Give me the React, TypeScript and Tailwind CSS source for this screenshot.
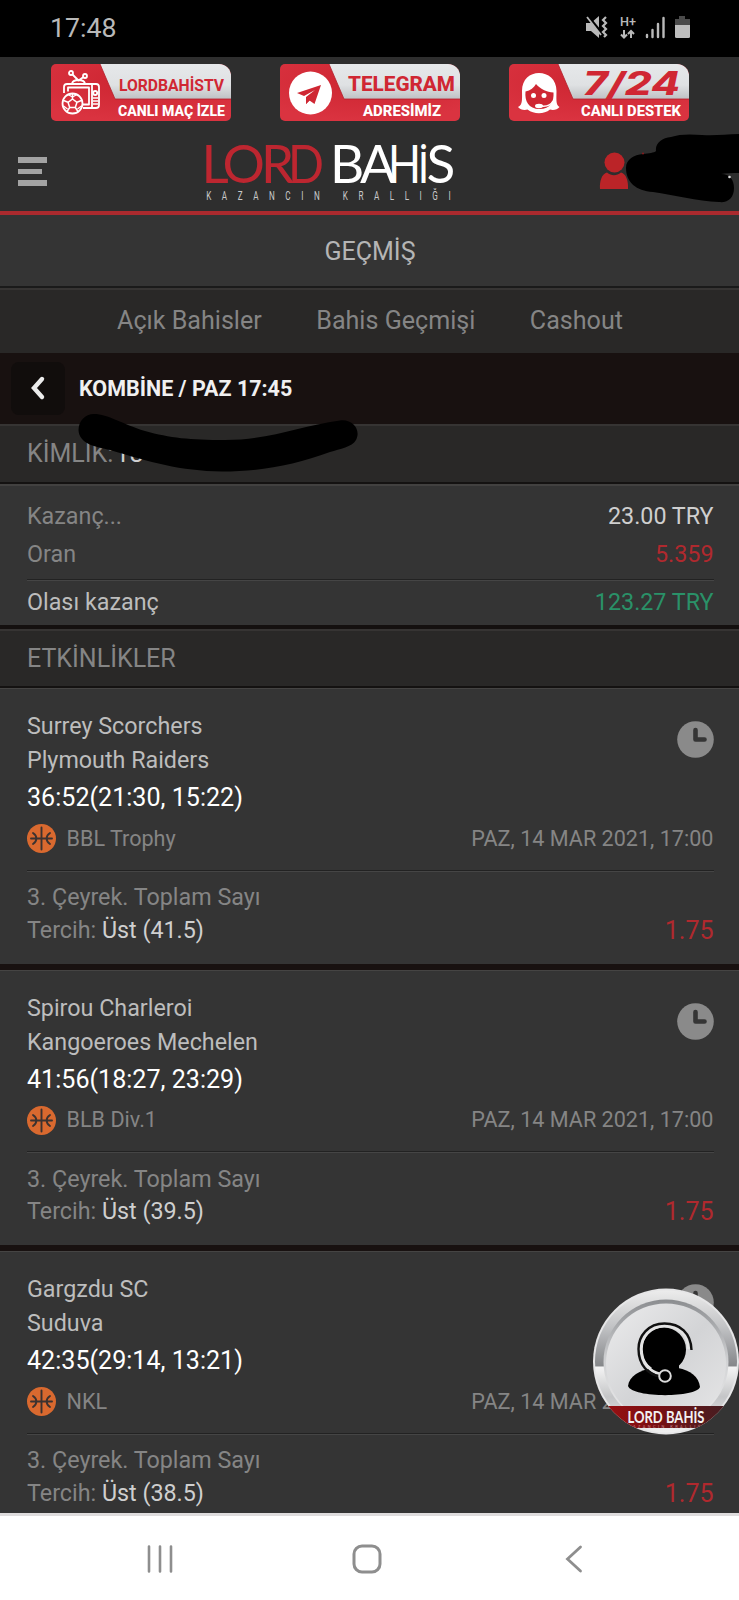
import type { ReactNode } from 'react';

interface BetEvent {
  home: string;
  away: string;
  score: string;
  league: string;
  date: string;
  market: string;
  pick: string;
  odds: string;
}

const events: BetEvent[] = [
  {
    home: 'Surrey Scorchers',
    away: 'Plymouth Raiders',
    score: '36:52(21:30, 15:22)',
    league: 'BBL Trophy',
    date: 'PAZ, 14 MAR 2021, 17:00',
    market: '3. Çeyrek. Toplam Sayı',
    pick: 'Üst (41.5)',
    odds: '1.75',
  },
  {
    home: 'Spirou Charleroi',
    away: 'Kangoeroes Mechelen',
    score: '41:56(18:27, 23:29)',
    league: 'BLB Div.1',
    date: 'PAZ, 14 MAR 2021, 17:00',
    market: '3. Çeyrek. Toplam Sayı',
    pick: 'Üst (39.5)',
    odds: '1.75',
  },
  {
    home: 'Gargzdu SC',
    away: 'Suduva',
    score: '42:35(29:14, 13:21)',
    league: 'NKL',
    date: 'PAZ, 14 MAR 2021, 17:00',
    market: '3. Çeyrek. Toplam Sayı',
    pick: 'Üst (38.5)',
    odds: '1.75',
  },
];

const tabs = ['Açık Bahisler', 'Bahis Geçmişi', 'Cashout'];

function StatusBar() {
  return (
    <div className="flex h-[57px] shrink-0 items-center justify-between bg-black pl-[50px] pr-[48px]">
      <span className="text-[26.700px] leading-none text-[#b9b9b9]">17:48</span>
      <svg width="106" height="26" viewBox="0 0 106 26" fill="none" className="-mt-1">
        {/* muted speaker */}
        <path d="M1 9h5l8-7v22l-8-7H1z" fill="#b9b9b9" />
        <path d="M1 0l17 21" stroke="#000" strokeWidth="3" />
        <path d="M2 3l14 18" stroke="#b9b9b9" strokeWidth="1.8" />
        <path d="M21 3l-3 3 3 3-3 3 3 3-3 3 3 3-2 2" stroke="#b9b9b9" strokeWidth="2.2" />
        {/* network type */}
        <text x="35" y="12" fontSize="12.500" fontWeight="500" fill="#b9b9b9" textLength="16" lengthAdjust="spacingAndGlyphs">H+</text>
        <path d="M39 16v7M36 20.500l3 3 3-3M46 24v-7M43 20l3-3 3 3" stroke="#b9b9b9" strokeWidth="2" />
        {/* signal */}
        <path d="M62 21v2M67.500 16v7M73 10v13M78.500 4v19" stroke="#b9b9b9" strokeWidth="2.4" strokeLinecap="round" />
        {/* battery */}
        <path d="M94 2h6v3h5v6H90V5h4z" fill="#4a4a4a" />
        <path d="M90 11h15v11.500a1.500 1.500 0 0 1-1.500 1.500h-12a1.500 1.500 0 0 1-1.500-1.500z" fill="#bdbdbd" />
      </svg>
    </div>
  );
}

function Banner({ id, children }: { id: string; children: ReactNode }) {
  return (
    <svg width="180" height="58" viewBox="0 0 180 58">
      <defs>
        <linearGradient id={`${id}-silver`} x1="0" y1="0" x2="0" y2="1">
          <stop offset="0" stopColor="#e6e8ea" />
          <stop offset="0.6" stopColor="#dfe1e3" />
          <stop offset="1" stopColor="#bfc1c4" />
        </linearGradient>
        <radialGradient id={`${id}-red`} cx="0.5" cy="0.3" r="0.7">
          <stop offset="0" stopColor="#cc2430" />
          <stop offset="1" stopColor="#da3340" />
        </radialGradient>
        <clipPath id={`${id}-clip`}>
          <path d="M5 0h163a12 12 0 0 1 12 12v40a5 5 0 0 1-5 5H5a5 5 0 0 1-5-5V5a5 5 0 0 1 5-5z" />
        </clipPath>
      </defs>
      <g clipPath={`url(#${id}-clip)`}>
        <rect width="180" height="57" fill={`url(#${id}-red)`} />
        <path d="M49 0h131v35H64z" fill={`url(#${id}-silver)`} />
        <path d="M49 0l15 35h116" fill="none" stroke="#b21f2b" strokeWidth="0.8" />
      </g>
      {children}
    </svg>
  );
}

function Banners() {
  return (
    <div className="flex h-[65px] gap-[49px] pl-[51px] pt-[7px]">
      <Banner id="tv">
        <g fill="none" stroke="#fff" strokeWidth="1.8" strokeLinejoin="round">
          <circle cx="20" cy="9" r="2" />
          <circle cx="34" cy="12" r="2" />
          <path d="M21.500 10.500l6 6 5-3.500M21 19.500q1-3.500 6.500-3.500t6.500 3.500" />
          <path d="M13 29v-6a3 3 0 0 1 3-3h29a3 3 0 0 1 3 3v18a3 3 0 0 1-3 3H32" />
          <path d="M17 27.500v-4h21v17H32M41 20v24" />
          <circle cx="44.200" cy="29" r="2" />
          <path d="M42 34h5M42 37h5M42 40h5" strokeWidth="1.300" />
          <circle cx="21.500" cy="39.500" r="10" />
          <path d="M21.500 35l4.500 3.300-1.700 5.200h-5.600L17 38.300zM21.500 35v-5M26 38.300l5-2M24.300 43.500l3 4.500M18.700 43.500l-3 4.500M17 38.300l-5-2" strokeWidth="1.500" />
          <path d="M17 30.500l4.500 2.500 4.500-2.500M30.500 42l-4 3M12.500 42l4 3" strokeWidth="1.300" />
        </g>
        <text x="68" y="27" fontSize="16.800" fontWeight="700" fill="#d02733" textLength="105" lengthAdjust="spacingAndGlyphs">LORDBAHİSTV</text>
        <text x="67" y="51.500" fontSize="14.500" fontWeight="800" fill="#fff" textLength="107" lengthAdjust="spacingAndGlyphs">CANLI MAÇ İZLE</text>
      </Banner>
      <Banner id="telegram">
        <circle cx="30.500" cy="29" r="21.500" fill="#fff" />
        <path d="M17 29l24-8-6.500 19-5-3.500-3.500 3.500v-7l9-7-11 6z" fill="#cf2733" />
        <path d="M26 40v-7l4 3z" fill="#cf2733" />
        <text x="68" y="27" fontSize="21" fontWeight="800" fill="#d02733" textLength="107" lengthAdjust="spacingAndGlyphs">TELEGRAM</text>
        <text x="83" y="51.500" fontSize="14.500" fontWeight="800" fill="#fff" textLength="78" lengthAdjust="spacingAndGlyphs">ADRESİMİZ</text>
      </Banner>
      <Banner id="support">
        {/* agent: hair, face, fringe, headset */}
        <path d="M9 43c5-2 4-9 4-16C13 15 21 9 30 9s17.500 6 17.500 18c0 7-1 14 3 16-2 2.500-6 3.500-9.500 2.500-6 5-16 5-22.500 0C15 46.500 11 45.500 9 43z" fill="#fff" />
        <path d="M16.500 27.500c5-1 8.500-4 10.500-7.500 4 5 11 8 17.500 8.500.6 9-3 16.500-14 16.500s-15-8-14-17.500z" fill="#cf2733" />
        <circle cx="24.500" cy="31.500" r="2.500" fill="#fff" />
        <circle cx="35" cy="31.500" r="2.500" fill="#fff" />
        <path d="M44 37q-3 6-12 5" stroke="#fff" strokeWidth="1.500" fill="none" />
        <ellipse cx="30" cy="42" rx="4" ry="2.200" fill="#fff" />
        <text x="74" y="31" fontSize="32" fontWeight="800" fontStyle="italic" fill="#d02733" textLength="97" lengthAdjust="spacingAndGlyphs" fontFamily="Inter, sans-serif">7/24</text>
        <text x="72" y="51.500" fontSize="14.500" fontWeight="800" fill="#fff" textLength="100" lengthAdjust="spacingAndGlyphs">CANLI DESTEK</text>
      </Banner>
    </div>
  );
}

function Header() {
  return (
    <header className="h-[158px] shrink-0 border-b-4 border-[#ab2a2e] bg-[#2e2e2e]">
      <Banners />
      <div className="relative flex h-[89px] items-start pl-[18px]">
        <div className="mt-[35px] flex flex-col gap-[6px]">
          <span className="h-[5.500px] w-[29px] bg-[#a3a3a3]" />
          <span className="h-[5.500px] w-6 bg-[#a3a3a3]" />
          <span className="h-[5.500px] w-[29px] bg-[#a3a3a3]" />
        </div>
        <svg width="250" height="70" viewBox="0 0 250 70" className="ml-[156px] mt-[17px] overflow-visible" fontFamily="Lato, sans-serif">
          {/* letters are placed one by one, the wordmark is kerned very tight */}
          <g fontSize="53" fill="#bd2630">
            <text x="-1.500 19.500 58" y="43.800">LOR</text>
            <text x="85" y="43.800" textLength="36" lengthAdjust="spacingAndGlyphs">D</text>
          </g>
          <g fontSize="53" fill="#fff">
            <text x="127 157" y="43.800">BA</text>
            <text x="185" y="43.800" textLength="33" lengthAdjust="spacingAndGlyphs">H</text>
            <text x="215" y="43.800" fontSize="43" textLength="11" lengthAdjust="spacingAndGlyphs">İ</text>
            <text x="223.500" y="43.800">S</text>
          </g>
          <g transform="scale(0.65 1)">
            <text x="5" y="61" fontSize="12.500" fill="#c9c9c9" fontFamily="Roboto, sans-serif" textLength="376">KAZANCIN KRALLIĞI</text>
          </g>
        </svg>
        <svg width="30" height="40" viewBox="0 0 30 40" className="ml-[146px] mt-[29px]" fill="#bb2428">
          <circle cx="15.500" cy="11.500" r="10" />
          <path d="M1 38c-.6-8 2-15.500 7-16.500 4.500 3.500 9.500 3.500 14 0 5 1 7.600 8.500 7 16.500z" />
        </svg>
        {/* marker stroke over the account name */}
        <svg width="115" height="75" viewBox="625 130 115 75" className="absolute right-[-1px] top-[8px]">
          <path d="M626 168c0-9 8-13 17-14 6-1 11-1 13-3-1-8 6-13 15-14 8-3 20-3 31-2 14 1 24-1 38-1v39c-7 0-14 0-19 1 9 0 13 6 13 14 0 10-6 15-15 14-22-1-45-7-66-10-17-1-27-10-27-24z" fill="#000" />
          <circle cx="729.500" cy="177" r="1.300" fill="#ddd" />
          <circle cx="643" cy="153.500" r="1" fill="#8a1a1c" />
        </svg>
      </div>
    </header>
  );
}

function SectionTitle({ children }: { children: ReactNode }) {
  return (
    <div className="flex h-[56px] items-center border-t-2 border-[#363433] bg-[#292827] px-[27px] text-[25px] leading-none text-[#858585]">
      {children}
    </div>
  );
}

function Divider() {
  return <div className="h-[2px] border-b border-t border-b-[#454545] border-t-[#222]" />;
}

function SummaryRow({ label, value, labelClass, valueClass }: { label: string; value: string; labelClass: string; valueClass: string }) {
  return (
    <div className="flex h-[38px] items-center justify-between text-[23.300px] leading-none">
      <span className={labelClass}>{label}</span>
      <span className={valueClass}>{value}</span>
    </div>
  );
}

function ClockIcon() {
  return (
    <svg width="37" height="37" viewBox="0 0 37 37">
      <circle cx="18.500" cy="18.500" r="18.300" fill="#8a8a8a" />
      <path d="M18.500 9v9.500H27.500" fill="none" stroke="#353535" strokeWidth="4.600" strokeLinecap="round" strokeLinejoin="round" />
    </svg>
  );
}

function BasketballIcon() {
  return (
    <svg width="29" height="29" viewBox="0 0 29 29">
      <circle cx="14.500" cy="14.500" r="14.500" fill="#d9692f" />
      <path d="M14.500 3.500v22M4 14.500h21M6 9c4.500 3 4.500 8 0 11M23 9c-4.500 3-4.500 8 0 11" fill="none" stroke="#3b3230" strokeWidth="1.900" strokeLinecap="round" />
    </svg>
  );
}

function EventCard({ event }: { event: BetEvent }) {
  return (
    <div className="h-[281.500px] shrink-0 border-b-[6px] border-[#181110]">
      <div className="h-full border-t border-[#454443] bg-[#343434] pl-[27px] pr-[25.500px] pt-[20px]">
        <div className="flex items-start justify-between">
          <div className="text-[23.300px] leading-[34px] text-[#bdbdbd]">
            <p>{event.home}</p>
            <p>{event.away}</p>
          </div>
          <div className="mt-[12px]">
            <ClockIcon />
          </div>
        </div>
        <p className="text-[25.100px] leading-[42px] text-white">{event.score}</p>
        <div className="flex h-[39.500px] items-center text-[21.600px] leading-none text-[#858585]">
          <BasketballIcon />
          <span className="ml-[10.500px]">{event.league}</span>
          <span className="ml-auto">{event.date}</span>
        </div>
        <div className="mb-[9.500px] mt-[11px]">
          <Divider />
        </div>
        <p className="text-[23.300px] leading-[32.500px] text-[#858585]">{event.market}</p>
        <div className="flex justify-between leading-[33px] text-[#858585]">
          <p className="text-[23.300px]">
            Tercih: <span className="text-[#cfcfcf]">{event.pick}</span>
          </p>
          <span className="text-[25px] text-[#b0292e]">{event.odds}</span>
        </div>
      </div>
    </div>
  );
}

function SupportBubble() {
  return (
    <svg width="147" height="148" viewBox="0 0 147 148" className="absolute right-0 top-[1288px]">
      <defs>
        <linearGradient id="rim" x1="0" y1="0" x2="0" y2="1">
          <stop offset="0" stopColor="#ececec" />
          <stop offset="0.25" stopColor="#c3c4c6" />
          <stop offset="0.53" stopColor="#85878a" />
          <stop offset="0.54" stopColor="#f4f4f4" />
          <stop offset="0.75" stopColor="#c4c5c7" />
          <stop offset="1" stopColor="#f0f0f0" />
        </linearGradient>
        <linearGradient id="groove" x1="0" y1="0" x2="0" y2="1">
          <stop offset="0" stopColor="#8b8d90" />
          <stop offset="0.5" stopColor="#d2d3d5" />
          <stop offset="1" stopColor="#ededed" />
        </linearGradient>
        <linearGradient id="face" x1="0" y1="0" x2="1" y2="1">
          <stop offset="0" stopColor="#ececed" />
          <stop offset="0.5" stopColor="#d3d4d6" />
          <stop offset="1" stopColor="#e6e6e7" />
        </linearGradient>
        <linearGradient id="ribbon" x1="0" y1="0" x2="1" y2="0">
          <stop offset="0" stopColor="#a01013" />
          <stop offset="0.4" stopColor="#7d0f12" />
          <stop offset="1" stopColor="#3a2024" />
        </linearGradient>
        <clipPath id="bubble">
          <circle cx="74" cy="73.500" r="73" />
        </clipPath>
      </defs>
      <g clipPath="url(#bubble)">
        <rect width="147" height="148" fill="#e6e6e7" />
        <circle cx="74" cy="73.500" r="71" fill="url(#rim)" />
        <circle cx="74" cy="74" r="62.500" fill="url(#groove)" />
        <circle cx="74" cy="75.500" r="60" fill="url(#face)" />
        <path d="M36 98c1-10 12-16 25-18h25c12 2 21 9 22 19-4 11-68 11-72-1z" fill="#000" />
        <path d="M60 74h27v15H60z" fill="#000" />
        <circle cx="72" cy="61.500" r="22" fill="#000" />
        <path d="M96.500 61C96 46 86 38 72.500 38 58 38 49.500 49 49.500 61c0 13 8 23 19 25" fill="none" stroke="#e4e4e4" strokeWidth="2.600" />
        <path d="M99.500 62C99 45 88 35.500 72.500 35.500 56 35.500 46.500 48 46.500 61c0 16 10 26 22 27.500" fill="none" stroke="#111" strokeWidth="2.400" />
        <circle cx="73" cy="88" r="5.800" fill="#000" stroke="#dcdcdc" strokeWidth="2" />
        <rect y="118" width="147" height="22" fill="url(#ribbon)" />
        <text x="35.500" y="134.500" fontSize="17.500" fontWeight="700" fill="#f2f2f2" fontFamily="Lato, sans-serif" textLength="77" lengthAdjust="spacingAndGlyphs">LORD BAHİS</text>
        <text x="36" y="139.800" fontSize="4" fill="#c48a8c" textLength="76">KAZANCIN KRALLIĞI</text>
      </g>
    </svg>
  );
}

function NavBar() {
  return (
    <div className="flex h-[87px] shrink-0 items-center border-t-[3px] border-[#dedcdd] bg-white pl-[146px] pt-[1.500px]">
      <svg width="28" height="30" viewBox="0 0 28 30" stroke="#8e8e8e" strokeWidth="2.600" strokeLinecap="round">
        <path d="M3 2.500v25M14 2.500v25M25 2.500v25" />
      </svg>
      <svg width="30" height="30" viewBox="0 0 30 30" fill="none" stroke="#8e8e8e" strokeWidth="3" className="ml-[177.500px]">
        <rect x="2" y="2" width="26" height="26" rx="8" />
      </svg>
      <svg width="22" height="30" viewBox="0 0 22 30" fill="none" stroke="#8e8e8e" strokeWidth="2.800" strokeLinecap="round" className="ml-[182px]">
        <path d="M16.500 3L3.500 15l13 12" />
      </svg>
    </div>
  );
}

export default function App() {
  return (
    <div className="relative flex h-[1600px] w-[739px] flex-col overflow-hidden bg-[#343434] font-['Roboto',sans-serif]">
      <StatusBar />
      <Header />

      <div className="flex h-[73px] shrink-0 items-center justify-center border-b-2 border-[#1a1a1a] bg-[#343434] pl-px pt-px text-[25px] leading-none text-[#b5b5b5]">
        <span>GEÇMİŞ</span>
      </div>
      <div className="flex h-[65px] shrink-0 items-center justify-center gap-[54.500px] border-t-2 border-[#363433] bg-[#292827] pb-[2px] pl-px text-[25.100px] leading-none text-[#858585]">
        {tabs.map((tab) => (
          <span key={tab}>{tab}</span>
        ))}
      </div>

      <div className="flex h-[71px] shrink-0 items-center bg-[#181110] pl-[11px]">
        <div className="flex h-[53px] w-[54px] items-center justify-center rounded-lg bg-[#110d0c]">
          <svg width="16" height="26" viewBox="0 0 16 26" fill="none" stroke="#ececec" strokeWidth="4.400" strokeLinecap="round" className="-mt-[2px]">
            <path d="M12 4L4 13l8 9" />
          </svg>
        </div>
        <span className="ml-[14px] text-[21.500px] font-bold leading-none text-[#f0f0f0]">KOMBİNE / PAZ 17:45</span>
      </div>

      <div className="h-[60px] shrink-0 border-b-2 border-[#141211] bg-[#292827]">
        <SectionTitle>
          <span>
            KİMLİK:<span className="ml-[2px] text-[#cfcfcf]">18</span>
          </span>
        </SectionTitle>
      </div>

      <div className="h-[145px] shrink-0 border-b-4 border-t-2 border-b-[#14100f] border-t-[#424140] bg-[#343434] pl-[27px] pr-[25.500px] pt-[12px]">
        <SummaryRow label="Kazanç..." value="23.00 TRY" labelClass="text-[#858585]" valueClass="text-[#cfcfcf]" />
        <SummaryRow label="Oran" value="5.359" labelClass="text-[#858585]" valueClass="text-[#b0292e]" />
        <div className="mb-[3px] mt-[5px]">
          <Divider />
        </div>
        <SummaryRow label="Olası kazanç" value="123.27 TRY" labelClass="text-[#bdbdbd]" valueClass="text-[#2a9168]" />
      </div>

      <div className="h-[59px] shrink-0 border-b-2 border-[#141211] bg-[#292827]">
        <SectionTitle>
          <span>ETKİNLİKLER</span>
        </SectionTitle>
      </div>

      <div className="flex min-h-0 flex-1 flex-col overflow-hidden">
        {events.map((event) => (
          <EventCard key={event.home} event={event} />
        ))}
      </div>
      <NavBar />

      {/* marker stroke over the coupon id */}
      <svg width="284" height="62" viewBox="76 412 284 62" className="absolute left-[76px] top-[412px]">
        <path d="M94 414C108 414 122 424 145 431C170 438 190 440 225 440C270 440 300 426 340 420.500C354 419 361 431 356 440C352 447 340 449 330 452C295 465 260 471.500 222 471.500C180 471 150 462 110 450C96 447 79 444 78.500 430C78.500 421 85 414 94 414z" fill="#000" />
      </svg>
      <SupportBubble />
    </div>
  );
}
